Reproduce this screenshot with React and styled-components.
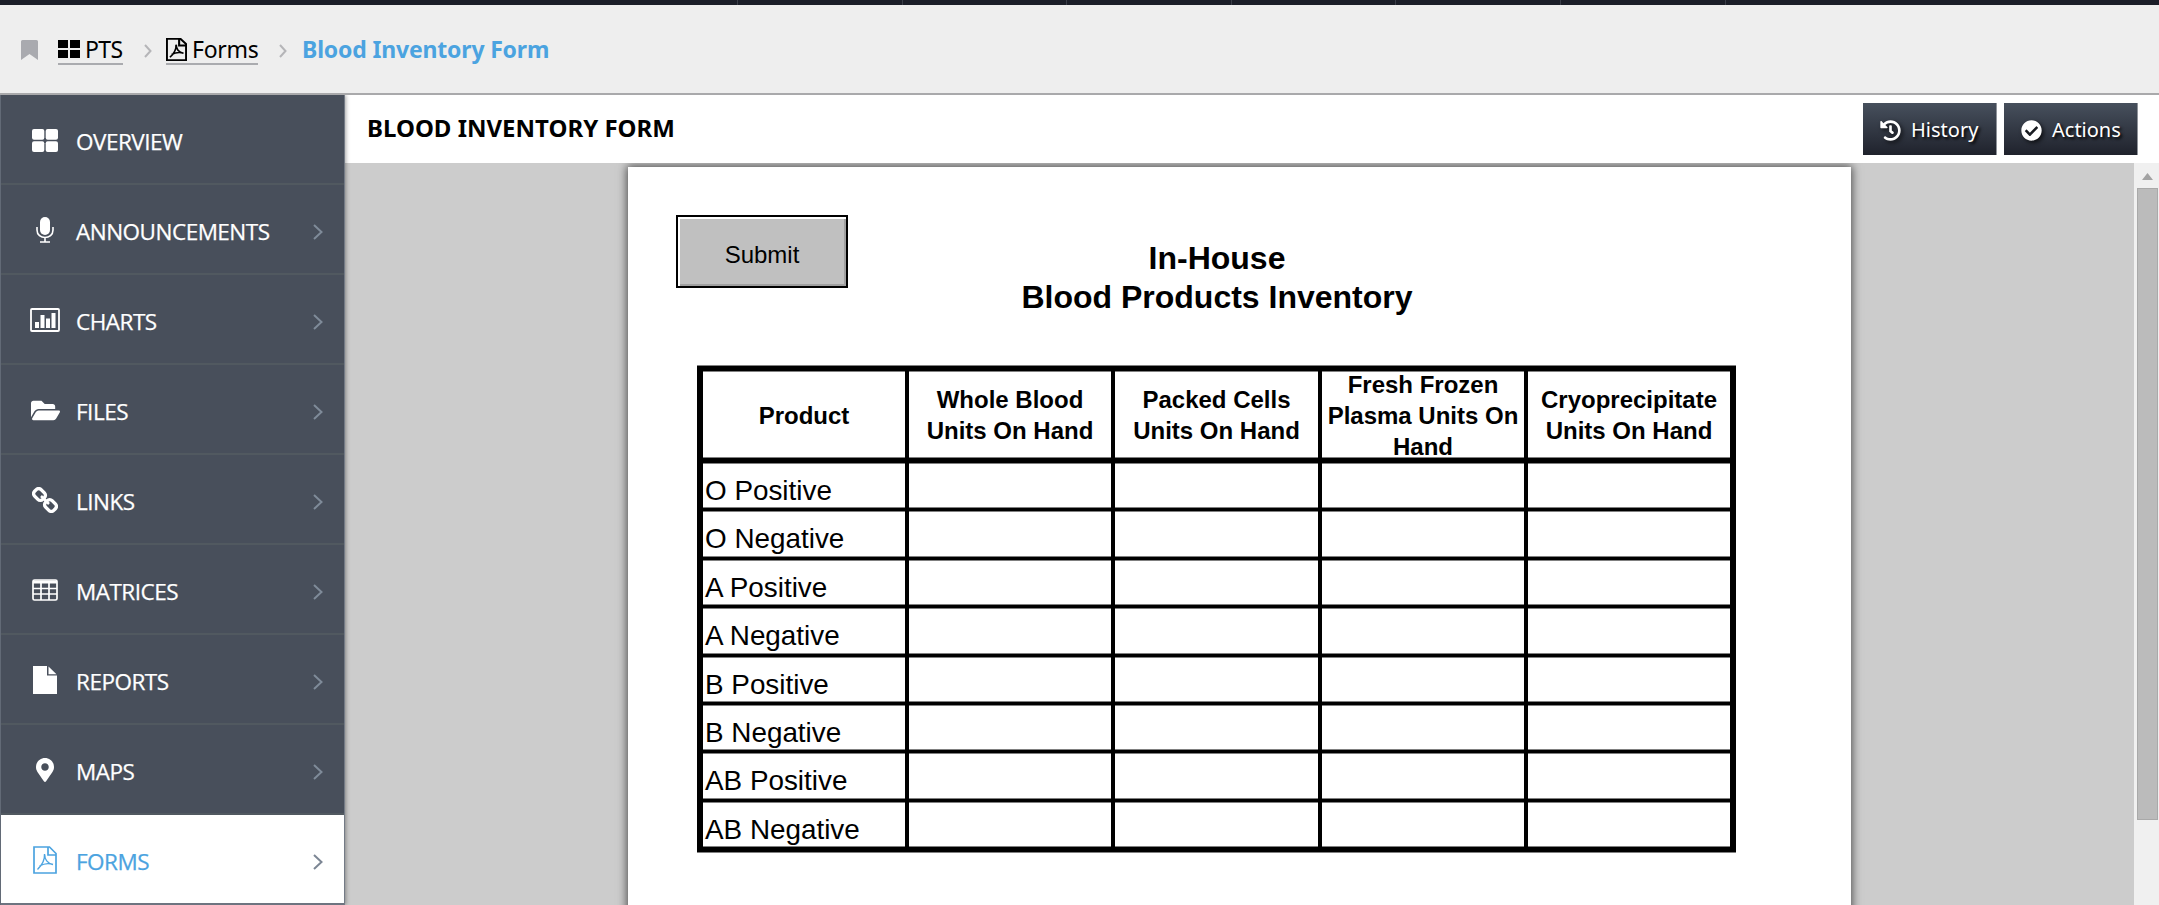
import React from "react";
import styled, { createGlobalStyle } from "styled-components";
import { FaFolderOpen, FaMapMarkerAlt, FaCheckCircle, FaHistory } from "react-icons/fa";

const Global = createGlobalStyle`
  * { box-sizing: border-box; }
  body { margin: 0; overflow: hidden; background: #ccc; }
`;
const Shell = styled.div`
  width: 2159px; height: 905px; overflow: hidden;
  display: flex; flex-direction: column;
  font-family: "Noto Sans", "Open Sans", sans-serif;
`;
const TopBar = styled.div`
  height: 5px; background: #1b1e28; flex: none;
  display: flex; padding-left: 737px;
`;
const TopTab = styled.div`
  width: 164.6px; flex: none; border-left: 1px solid #3a3e48;
`;
const Crumbs = styled.nav`
  height: 90px; flex: none; background: #eee;
  border-bottom: 2px solid #a9a9ab;
  padding: 0 0 0 21px; display: flex; align-items: flex-start;
`;
const BookmarkBox = styled.div`
  width: 37px; padding-top: 35px; line-height: 0; color: #a9aaaf; flex: none;
`;
const Crumb = styled.a`
  display: flex; height: 60px; padding-top: 27px; flex: none;
  border-bottom: 2px solid #aaabaf; color: #000; gap: 5px;
  font-size: 23px; line-height: 34px; white-space: nowrap; width: ${(p) => p.$w}px;
  letter-spacing: ${(p) => p.$ls || 0}px;
  svg { flex: none; margin-top: ${(p) => p.$iconTop}px; }
`;
const Sep = styled.div`
  width: ${(p) => p.$w}px; padding-top: 39px; padding-left: 21px; flex: none; line-height: 0;
`;
const Current = styled.span`
  padding-top: 27px; font-size: 23px; line-height: 34px; font-weight: 700; color: #4ba3e0; white-space: nowrap;
  letter-spacing: -0.17px;
`;
const Body = styled.div`
  display: flex; flex: 1; min-height: 0;
`;
const Side = styled.aside`
  width: 345px; flex: none; background: #484f5b; position: relative; z-index: 2;
  border-left: 1px solid #626a76; border-right: 1px solid #747b86;
  box-shadow: 1px 0 4px rgba(0,0,0,.35);
  clip-path: inset(0 -6px 0 0);
`;
const Item = styled.div`
  height: 90px; display: flex; align-items: center; padding: 0 21px 0 24px;
  border-bottom: 2px solid ${(p) => (p.$active ? "#6d7480" : "#515960")};
  background: ${(p) => (p.$active ? "#fff" : "transparent")};
  color: ${(p) => (p.$active ? "#4ba3e0" : "#fff")};
  & > svg { margin-top: 5px; }
`;
const IconBox = styled.span`
  width: 40px; height: 34px; margin-right: 11px; padding-top: 2px; flex: none;
  display: flex; align-items: center; justify-content: center;
`;
const Label = styled.span`
  flex: 1; font-family: "Open Sans", sans-serif; font-size: 22.5px; font-weight: 500; line-height: 32px; padding-top: 5px;
  letter-spacing: -0.5px; -webkit-text-stroke: 0.25px currentColor;
`;
const Main = styled.main`
  flex: 1; min-width: 0; display: flex; flex-direction: column;
`;
const Head = styled.header`
  height: 68px; flex: none; background: #fff; display: flex; align-items: center; gap: 8px; padding: 0 22px 0 22px;
`;
const Title = styled.h1`
  flex: 1; margin: 0; font-size: 24px; font-weight: 700; line-height: 32px; padding-bottom: 3px; color: #000; white-space: nowrap;
`;
const Button = styled.button`
  width: 133px; height: 52px; border: 0; padding: 0 0 0 17px; display: flex; align-items: center; gap: 10px;
  background: linear-gradient(#47505d, #1f222c); color: #fff; font: 400 20px "Noto Sans", sans-serif;
  text-shadow: 2px 2px 3px #000; box-shadow: 1px 0 0 #8f939a;
  svg { filter: drop-shadow(2px 2px 2px rgba(0,0,0,.7)); flex: none; margin-top: 2px; }
`;
const Viewer = styled.section`
  flex: 1; min-height: 0; display: flex; background: #ccc;
`;
const Canvas = styled.div`
  flex: 1; min-width: 0; overflow: hidden; padding: 4px 0 0 283px;
`;
const Page = styled.article`
  width: 1223px; height: 780px; background: #fff; box-shadow: 0 0 9px 1px rgba(0,0,0,.65); padding: 48px 0 0 48px;
`;
const PageTop = styled.div`
  height: 151px;
  display: flex; align-items: flex-start; font-family: "Liberation Sans", Arial, sans-serif;
`;
const Submit = styled.button`
  width: 172px; height: 73px; padding: 6px 0 0 0; flex: none; background: #c0c0c0; border: 2px solid #000; color: #000;
  box-shadow: inset 2px 2px 0 #fff, inset -2px -2px 0 #a0a0a0; font: 24px "Liberation Sans", Arial, sans-serif;
`;
const FormTitle = styled.h2`
  margin: 24px 0 0 173px; width: 392px; text-align: center; font-size: 32px; line-height: 39px; font-weight: 700; white-space: nowrap;
`;
const Table = styled.div`
  width: 1039px; margin-left: 21px; border: solid #000; border-width: 5px 6px; color: #000;
  box-shadow: 0 1px 0 #808080, 0 -1px 0 #808080;
  font-family: "Liberation Sans", Arial, sans-serif;
`;
const Row = styled.div`
  display: grid; grid-template-columns: 206px 206px 207px 206px 202px; height: ${(p) => p.$h}px;
  border-bottom: ${(p) => p.$line}px solid #000;
`;
const Cell = styled.div`
  border-right: ${(p) => (p.$last ? 0 : 4)}px solid #000;
  box-shadow: inset 0 1px 0 #808080, inset 0 -1px 0 #808080;
  overflow: hidden; white-space: nowrap;
  font-size: 27.85px; line-height: 32px; padding: 12px 0 0 2px;
`;
const HeadCell = styled(Cell)`
  display: flex; align-items: center; justify-content: center; text-align: center;
  font-size: 24px; font-weight: 700; line-height: 31px; white-space: pre; padding: 1px 0 0; min-height: 0;
`;
const Scroll = styled.div`
  width: 25px; flex: none; background: #f0f0f0; padding: 9px 1px 0 3px; display: flex; flex-direction: column; align-items: center;
`;
const Thumb = styled.div`
  width: 21px; height: 632px; margin-top: 8px; background: #bbb; border: 1px solid #a9a9a9; flex: none;
`;

const Grid4 = ({ w, h, r = 0, g = 2 }) => (
  <svg width={w} height={h} viewBox={`0 0 ${w} ${h}`} fill="currentColor">
    {[0, 1].map((i) => [0, 1].map((j) => (
      <rect key={`${i}${j}`} x={i * ((w + g) / 2)} y={j * ((h + g) / 2)} width={(w - g) / 2} height={(h - g) / 2} rx={r} />
    )))}
  </svg>
);
const Pdf = ({ w, h, s = 2 }) => (
  <svg width={w} height={h} viewBox="0 0 24 28" preserveAspectRatio="none" fill="none" stroke="currentColor" strokeWidth={s}>
    <path d="M1 1H16.5L23 7.500V27H1Z M15 1V9H23" />
    <path strokeWidth={s * 0.8} d="M11.500 8C12 14 9 19 4.500 23.500 M11.700 8.500C11.500 13 14.500 17.500 20 18.500 M6.500 20C11 17.500 16 17 20 18.500" />
  </svg>
);
const Chevron = ({ w, h, c, s = 2 }) => (
  <svg width={w} height={h} viewBox={`0 0 ${w} ${h}`} fill="none" stroke={c} strokeWidth={s}>
    <path d={`M1 1L${w - 1.5} ${h / 2}L1 ${h - 1}`} />
  </svg>
);
const Mic = () => (
  <svg width="18" height="26" viewBox="0 0 18 26" fill="none" stroke="currentColor" strokeWidth="1.6">
    <rect x="4" y="0" width="10" height="18" rx="5" fill="currentColor" stroke="none" />
    <path d="M1 10V13C1 23 17 23 17 13V10M9 20.500V25M4 25H14" />
  </svg>
);
const Chart = () => (
  <svg width="30" height="24" viewBox="0 0 30 24" fill="currentColor">
    <rect x="1" y="1" width="28" height="22" rx="1" fill="none" stroke="currentColor" strokeWidth="1.8" />
    <path d="M5 14h4v6H5zM10.500 7h4v13h-4zM16 10.500h4V20h-4zM21.500 5h4v15h-4z" />
  </svg>
);
const Links = () => (
  <svg width="26" height="26" viewBox="0 0 26 26" fill="none" stroke="currentColor" strokeWidth="3">
    <rect x="-5" y="-4" width="10" height="8" rx="3" transform="translate(7.500 7.500) rotate(45) scale(1.150)" />
    <rect x="-5" y="-4" width="10" height="8" rx="3" transform="translate(18.500 18.500) rotate(45) scale(1.150)" />
    <path d="M9 9L17 17" strokeWidth="2.500" />
  </svg>
);
const Matrix = () => (
  <svg width="26" height="22" viewBox="0 0 26 22" fill="none" stroke="currentColor" strokeWidth="1.700">
    <rect x="1" y="1" width="24" height="20" rx="1.500" />
    <path d="M1 3H25" strokeWidth="3" />
    <path d="M1 9.500H25M1 15H25M9 3V21M17 3V21" />
  </svg>
);
const Report = () => (
  <svg width="24" height="28" viewBox="0 0 24 28" fill="currentColor">
    <path d="M0 0H14V9.500H24V28H0ZM15.500 .5L23.500 8.200H15.500Z" />
  </svg>
);

const items = [
  ["OVERVIEW", <Grid4 w={26} h={23} r={2} g={1.4} />],
  ["ANNOUNCEMENTS", <Mic />],
  ["CHARTS", <Chart />],
  ["FILES", <FaFolderOpen size={29} />],
  ["LINKS", <Links />],
  ["MATRICES", <Matrix />],
  ["REPORTS", <Report />],
  ["MAPS", <FaMapMarkerAlt size={24} />],
  ["FORMS", <Pdf w={24} h={28} s={1.7} />],
];
const heads = ["Product", "Whole Blood\nUnits On Hand", "Packed Cells\nUnits On Hand", "Fresh Frozen\nPlasma Units On\nHand", "Cryoprecipitate\nUnits On Hand"];
const rows = [
  ["O Positive", 48], ["O Negative", 49], ["A Positive", 48], ["A Negative", 49],
  ["B Positive", 48], ["B Negative", 48], ["AB Positive", 49], ["AB Negative", 45],
];

export default function App() {
  return (
    <Shell>
      <Global />
      <TopBar>{[0, 1, 2, 3, 4, 5, 6].map((n) => <TopTab key={n} />)}</TopBar>
      <Crumbs>
        <BookmarkBox>
          <svg width="17" height="20" viewBox="0 0 17 20" fill="currentColor"><path d="M0 1.500Q0 0 1.500 0H15.500Q17 0 17 1.500V20L8.500 14L0 20Z" /></svg>
        </BookmarkBox>
        <Crumb $w={65} $iconTop={8} $ls={-0.6}><Grid4 w={22} h={18} /><span>PTS</span></Crumb>
        <Sep $w={43}><Chevron w={8} h={14} c="#b5b5b8" /></Sep>
        <Crumb $w={92} $iconTop={6} $ls={-0.3}><Pdf w={21} h={23} s={2.4} /><span>Forms</span></Crumb>
        <Sep $w={44}><Chevron w={8} h={14} c="#b5b5b8" /></Sep>
        <Current>Blood Inventory Form</Current>
      </Crumbs>
      <Body>
        <Side>
          {items.map(([name, icon], i) => (
            <Item key={name} $active={name === "FORMS"}>
              <IconBox>{icon}</IconBox>
              <Label>{name}</Label>
              {i > 0 && <Chevron w={10} h={16} c={name === "FORMS" ? "#7c8694" : "#7f8b99"} />}
            </Item>
          ))}
        </Side>
        <Main>
          <Head>
            <Title>BLOOD INVENTORY FORM</Title>
            <Button><FaHistory size={21} />History</Button>
            <Button><FaCheckCircle size={21} />Actions</Button>
          </Head>
          <Viewer>
            <Canvas>
              <Page>
                <PageTop>
                  <Submit>Submit</Submit>
                  <FormTitle>In-House<br />Blood Products Inventory</FormTitle>
                </PageTop>
                <Table>
                  <Row $h={92} $line={5}>
                    {heads.map((h, i) => <HeadCell key={h} $last={i === 4}>{h}</HeadCell>)}
                  </Row>
                  {rows.map(([name, h], i) => (
                    <Row key={name} $h={h} $line={i === 7 ? 0 : 3}>
                      <Cell>{name}</Cell><Cell /><Cell /><Cell /><Cell $last />
                    </Row>
                  ))}
                </Table>
              </Page>
            </Canvas>
            <Scroll>
              <svg width="11" height="8" viewBox="0 0 11 8"><path d="M0 8L5.500 1L11 8Z" fill="#a3a3a3" /></svg>
              <Thumb />
            </Scroll>
          </Viewer>
        </Main>
      </Body>
    </Shell>
  );
}
